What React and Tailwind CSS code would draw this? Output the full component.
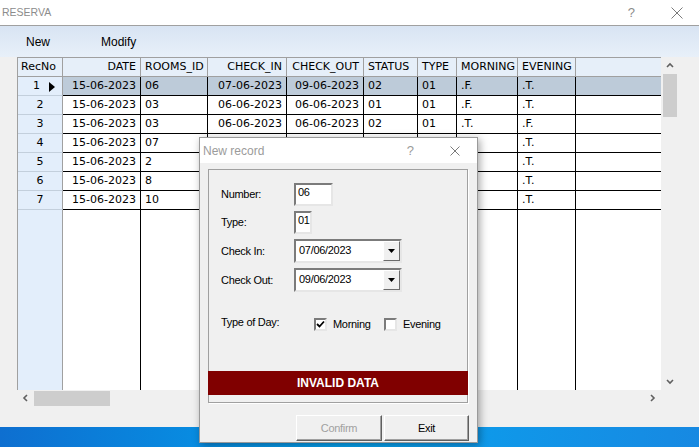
import React from "react";

const rows = [
	["15-06-2023", "06", "07-06-2023", "09-06-2023", "02", "01", ".F.", ".T."],
	["15-06-2023", "03", "06-06-2023", "06-06-2023", "01", "01", ".F.", ".T."],
	["15-06-2023", "03", "06-06-2023", "06-06-2023", "02", "01", ".T.", ".F."],
	["15-06-2023", "07", "", "", "", "", "", ".T."],
	["15-06-2023", "2", "", "", "", "", "", ".T."],
	["15-06-2023", "8", "", "", "", "", "", ".T."],
	["15-06-2023", "10", "", "", "", "", "", ".T."],
];

const cols = [
	{ label: "DATE", w: "w-[78px]", right: true },
	{ label: "ROOMS_ID", w: "w-[67px]" },
	{ label: "CHECK_IN", w: "w-[79px]", right: true },
	{ label: "CHECK_OUT", w: "w-[77px]", right: true },
	{ label: "STATUS", w: "w-[54px]" },
	{ label: "TYPE", w: "w-[39px]" },
	{ label: "MORNING", w: "w-[61px]" },
	{ label: "EVENING", w: "w-[58px]" },
];

function Chevron({ dir }) {
	const pts = {
		up: "1,5 4,2 7,5",
		down: "1,2 4,5 7,2",
		left: "5,1 2,4 5,7",
		right: "2,1 5,4 2,7",
	}[dir];
	return (
		<svg width="8" height="8" viewBox="0 0 8 8">
			<polyline points={pts} fill="none" stroke="#606060" strokeWidth="1.6" />
		</svg>
	);
}

function Column({ label, w, right, idx, last }) {
	return (
		<div className={`${w} shrink-0 flex flex-col`}>
			<div className={`h-[19px] flex items-center pt-[1px] px-[4px] bg-[#e6eff9] border-b border-[#a0a0a0] ${last ? "" : "border-r"} ${right ? "justify-end" : ""}`}>{label}</div>
			{rows.map((r, i) => (
				<div key={i} className={`h-[19px] flex items-center pt-[1px] px-[4px] border-b border-black ${last ? "" : "border-r"} ${i === 0 ? "bg-[#bdcbd9]" : "bg-white"} ${right ? "justify-end" : ""}`}>
					{last ? "" : r[idx]}
				</div>
			))}
			<div className={`flex-1 bg-white ${last ? "" : "border-r border-black"}`} />
		</div>
	);
}

function Sunken({ className, children }) {
	return <div className={`bg-white border-2 border-t-[#7b7b7b] border-l-[#7b7b7b] border-b-[#e6e6e6] border-r-[#e6e6e6] ${className}`}>{children}</div>;
}

function Combo({ value }) {
	return (
		<Sunken className="w-[108px] h-[24px] flex items-stretch">
			<span className="flex-1 pl-[3px] leading-[18px]">{value}</span>
			<div className="w-[17px] bg-[#f0f0f0] border border-t-white border-l-white border-b-[#6b6b6b] border-r-[#6b6b6b] flex items-center justify-center">
				<svg width="7" height="4" viewBox="0 0 7 4">
					<polygon points="0,0 7,0 3.5,4" fill="#000" />
				</svg>
			</div>
		</Sunken>
	);
}

function Check({ checked }) {
	return (
		<Sunken className="w-[13px] h-[13px] flex items-center justify-center">
			{checked && (
				<svg width="9" height="9" viewBox="0 0 9 9">
					<polyline points="1,4 3.5,6.5 8,1.5" fill="none" stroke="#000" strokeWidth="1.8" />
				</svg>
			)}
		</Sunken>
	);
}

function Btn({ children, disabled, w }) {
	return (
		<div className={`${w} h-[26px] flex items-center justify-center bg-[#f0f0f0] border border-t-white border-l-white border-b-[#5f5f5f] border-r-[#5f5f5f] shadow-[inset_-1px_-1px_0_#a0a0a0] ${disabled ? "text-[#a0a0a0]" : "text-black"}`}>
			{children}
		</div>
	);
}

export default function App() {
	return (
		<div className="w-[699px] h-[447px] relative overflow-hidden bg-[#f0f0f0] flex flex-col font-['Liberation_Sans',sans-serif]">
			{/* title bar */}
			<div className="h-[26px] bg-white border-b border-[#a0a0a0] flex items-center pl-[2px] pr-[16px] text-[#8c8c8c]">
				<span className="text-[10.5px]">RESERVA</span>
				<span className="ml-auto text-[13px] mr-[36px]">?</span>
				<svg width="12" height="12" viewBox="0 0 12 12">
					<path d="M0.5 0.5 L11.5 11.5 M11.5 0.5 L0.5 11.5" stroke="#7a7a7a" strokeWidth="1" />
				</svg>
			</div>

			{/* toolbar */}
			<div className="h-[31px] bg-linear-to-b from-[#d8e4f3] to-[#e8f0f9] flex items-center text-[12px] text-black">
				<span className="ml-[26px]">New</span>
				<span className="ml-[51px]">Modify</span>
			</div>

			{/* grid + vertical scroll */}
			<div className="h-[333px] flex font-['DejaVu_Sans',sans-serif] text-[11px] text-black">
				<div className="w-[17px]" />
				<div className="w-[644px] flex border-t border-[#a0a0a0]">
					<div className="w-[46px] shrink-0 flex flex-col bg-[#e3eefb] border-l border-[#a0a0a0]">
						<div className="h-[19px] flex items-center pt-[1px] px-[3px] bg-[#e6eff9] border-b border-r border-[#a0a0a0]">RecNo</div>
						{rows.map((r, i) => (
							<div key={i} className={`h-[19px] flex items-center pt-[1px] border-b border-r border-b-[#c3cfdc] border-r-[#a0a0a0] ${i === 0 ? "pl-[15px]" : "justify-center"}`}>
								{i + 1}
								{i === 0 && (
									<svg width="6" height="10" viewBox="0 0 6 10" className="ml-[9px]">
										<polygon points="0,0 6,5 0,10" fill="#000" />
									</svg>
								)}
							</div>
						))}
						<div className="flex-1 border-r border-[#a0a0a0]" />
					</div>
					{cols.map((c, i) => (
						<Column key={c.label} {...c} idx={i} />
					))}
					<Column label="" w="w-[85px]" idx={0} last />
				</div>
				<div className="w-[18px] flex flex-col">
					<div className="h-[17px] flex items-center justify-center">
						<Chevron dir="up" />
					</div>
					<div className="h-[43px] mx-[2px] bg-[#cdcdcd]" />
					<div className="flex-1" />
					<div className="h-[17px] flex items-center justify-center">
						<Chevron dir="down" />
					</div>
				</div>
			</div>

			{/* horizontal scroll */}
			<div className="h-[16px] flex">
				<div className="w-[17px]" />
				<div className="w-[644px] flex">
					<div className="w-[17px] flex items-center justify-center">
						<Chevron dir="left" />
					</div>
					<div className="w-[76px] mt-[1px] bg-[#cdcdcd]" />
					<div className="flex-1" />
					<div className="w-[17px] flex items-center justify-center">
						<Chevron dir="right" />
					</div>
				</div>
			</div>

			<div className="h-[21px]" />

			{/* taskbar */}
			<div className="h-[20px] bg-linear-to-r from-[#0e6fd0] via-[#06a2ee] to-[#1789e2]" />

			{/* dialog */}
			<div className="absolute left-[199px] top-[137px] w-[279px] h-[306px] border border-[#9a9a9a] bg-[#f0f0f0] shadow-[2px_2px_8px_rgba(0,0,0,0.35)] flex flex-col text-[11px] tracking-[-0.3px] text-black">
				<div className="h-[25px] bg-white flex items-center pl-[3px] pr-[17px] text-[#9b9b9b] tracking-normal">
					<span className="text-[12px]">New record</span>
					<span className="ml-auto text-[13px] mr-[36px]">?</span>
					<svg width="10" height="10" viewBox="0 0 10 10">
						<path d="M0.5 0.5 L9.5 9.5 M9.5 0.5 L0.5 9.5" stroke="#7a7a7a" strokeWidth="1" />
					</svg>
				</div>
				<div className="px-[8px] pt-[6px]">
					<div className="w-[260px] h-[234px] border border-[#a0a0a0] shadow-[1px_1px_0_#ffffff] flex flex-col">
						<div className="flex-1 pt-[13px] pl-[12px] flex flex-col">
							<div className="h-[23px] flex items-center">
								<span className="w-[73px]">Number:</span>
								<Sunken className="w-[39px] h-[23px] pl-[2px] leading-[15px]">06</Sunken>
							</div>
							<div className="h-[23px] mt-[5px] flex items-center">
								<span className="w-[73px]">Type:</span>
								<Sunken className="w-[18px] h-[23px] pl-[2px] leading-[15px]">01</Sunken>
							</div>
							<div className="h-[24px] mt-[5px] flex items-center">
								<span className="w-[73px]">Check In:</span>
								<Combo value="07/06/2023" />
							</div>
							<div className="h-[24px] mt-[5px] flex items-center">
								<span className="w-[73px]">Check Out:</span>
								<Combo value="09/06/2023" />
							</div>
							<div className="h-[14px] mt-[25px] flex items-center">
								<span className="w-[93px] -mt-[4px]">Type of Day:</span>
								<Check checked />
								<span className="w-[57px] pl-[6px]">Morning</span>
								<Check />
								<span className="pl-[6px]">Evening</span>
							</div>
						</div>
						<div className="h-[24px] -mx-px bg-[#800000] flex items-center justify-center text-white font-bold text-[12px] tracking-normal">INVALID DATA</div>
						<div className="h-[7px]" />
					</div>
					<div className="mt-[12px] flex justify-end gap-[2px]">
						<Btn w="w-[86px]" disabled>
							Confirm
						</Btn>
						<Btn w="w-[85px]">Exit</Btn>
					</div>
				</div>
			</div>
		</div>
	);
}
